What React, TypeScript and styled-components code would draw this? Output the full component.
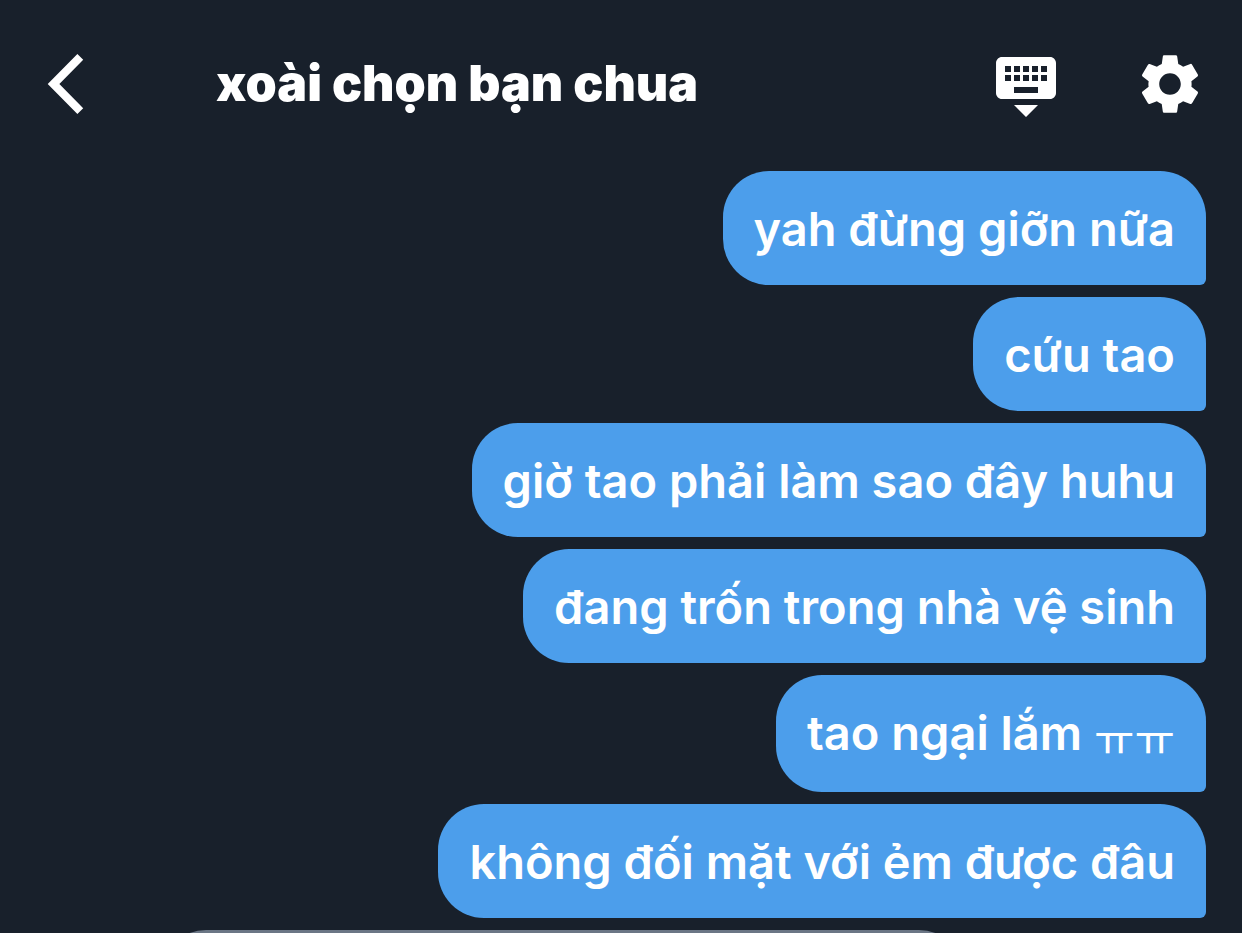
import React from 'react';
import styled, { createGlobalStyle } from 'styled-components';
import { MdKeyboardHide, MdSettings } from 'react-icons/md';

const GlobalStyle = createGlobalStyle`
  *, *::before, *::after { box-sizing: border-box; }
  html { background: #18202b; }
  body {
    margin: 0;
    color: #fff;
    font-family: Inter, "Noto Sans CJK KR", sans-serif;
  }
`;

const Screen = styled.div`
  height: 100vh;
  display: flex;
  flex-direction: column;
  overflow: hidden;
`;

const Header = styled.header`
  flex: none;
  display: flex;
  align-items: center;
  padding: 48px 36px;
`;

const IconButton = styled.button`
  flex: none;
  display: flex;
  padding: 0;
  border: 0;
  background: none;
  color: inherit;
  cursor: pointer;
`;

const Title = styled.h1`
  flex: 1;
  margin: 0 0 0 124px;
  padding-bottom: 2px;
  font-size: 50px;
  line-height: 60px;
  font-weight: 900;
`;

const Actions = styled.div`
  display: flex;
  gap: 72px;
`;

const Thread = styled.ol`
  flex: none;
  display: flex;
  flex-direction: column;
  gap: 12px;
  margin: 0;
  padding: 3px 36px 0 160px;
  list-style: none;
`;

const Bubble = styled.li<{ $incoming?: boolean }>`
  align-self: ${(p) => (p.$incoming ? 'flex-start' : 'flex-end')};
  min-width: ${(p) => (p.$incoming ? '77%' : '0')};
  min-height: 114px;
  padding: 29px 31px 27px;
  border-radius: ${(p) => (p.$incoming ? '46px 46px 46px 6px' : '46px 46px 6px 46px')};
  background: ${(p) => (p.$incoming ? '#6b7685' : '#4c9eeb')};
  font-size: 47px;
  line-height: 58px;
  font-weight: 600;
`;

const Jamo = styled.span`
  font-family: "Noto Sans CJK KR", sans-serif;
  font-size: 44px;
  line-height: 56px;
  font-weight: 400;
  vertical-align: middle;
`;

const messages: { id: number; text: string; jamo?: string }[] = [
  { id: 1, text: 'yah đừng giỡn nữa' },
  { id: 2, text: 'cứu tao' },
  { id: 3, text: 'giờ tao phải làm sao đây huhu' },
  { id: 4, text: 'đang trốn trong nhà vệ sinh' },
  { id: 5, text: 'tao ngại lắm ', jamo: 'ㅠㅠ' },
  { id: 6, text: 'không đối mặt với ẻm được đâu' },
];

export default function App() {
  return (
    <Screen>
      <GlobalStyle />
      <Header>
        <IconButton type="button" aria-label="Back">
          <svg width="56" height="64" viewBox="0 0 56 64" fill="none" stroke="currentColor" strokeWidth="8.2">
            <path d="M44.3 4.9 L17.5 32 L44.3 59.1" />
          </svg>
        </IconButton>
        <Title>xoài chọn bạn chua</Title>
        <Actions>
          <IconButton type="button" aria-label="Hide keyboard">
            <MdKeyboardHide size={72} />
          </IconButton>
          <IconButton type="button" aria-label="Settings">
            <MdSettings size={72} />
          </IconButton>
        </Actions>
      </Header>
      <Thread>
        {messages.map(({ id, text, jamo }) => (
          <Bubble key={id}>
            {text}
            {jamo && <Jamo lang="ko">{jamo}</Jamo>}
          </Bubble>
        ))}
        <Bubble $incoming />
      </Thread>
    </Screen>
  );
}
